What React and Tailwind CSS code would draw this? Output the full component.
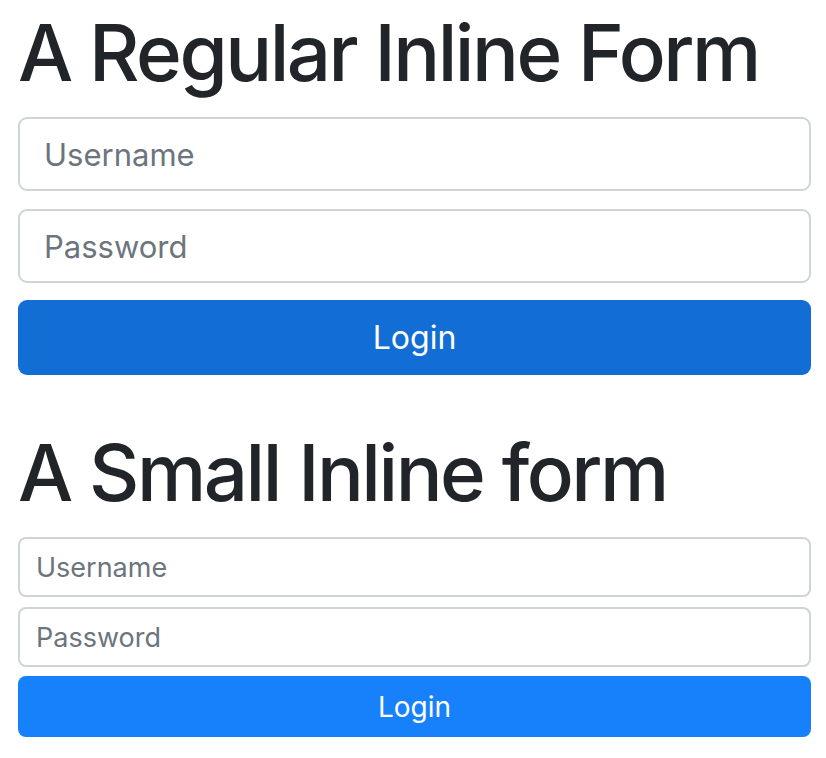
export default function App() {
  return (
    <div className="min-h-screen bg-white pl-[18px] pr-[15px] pt-[5px] font-['Inter',sans-serif] text-[#212529]">
      <h1 className="text-[78px] leading-[96px] font-medium tracking-[-2.5px]">A Regular Inline Form</h1>
      <form className="mt-4 flex flex-col">
        <input
          placeholder="Username"
          className="h-[74px] rounded-[9px] border-2 border-[#ced4da] px-6 text-[31px] outline-none placeholder:text-[#6c757d]"
        />
        <input
          placeholder="Password"
          className="mt-[18px] h-[74px] rounded-[9px] border-2 border-[#ced4da] px-6 text-[31px] outline-none placeholder:text-[#6c757d]"
        />
        <button type="button" className="mt-[17px] h-[75px] rounded-[9px] bg-[#126dd5] text-[32px] text-white">
          Login
        </button>
      </form>

      <h1 className="mt-[50px] text-[78px] leading-[96px] font-medium tracking-[-2.5px]">A Small Inline form</h1>
      <form className="mt-4 flex flex-col">
        <input
          placeholder="Username"
          className="h-[60px] rounded-[8px] border-2 border-[#ced4da] px-4 text-[27px] outline-none placeholder:text-[#6c757d]"
        />
        <input
          placeholder="Password"
          className="mt-[10px] h-[60px] rounded-[8px] border-2 border-[#ced4da] px-4 text-[27px] outline-none placeholder:text-[#6c757d]"
        />
        <button type="button" className="mt-[9px] h-[61px] rounded-[8px] bg-[#1780fb] text-[28px] text-white">
          Login
        </button>
      </form>
    </div>
  );
}
